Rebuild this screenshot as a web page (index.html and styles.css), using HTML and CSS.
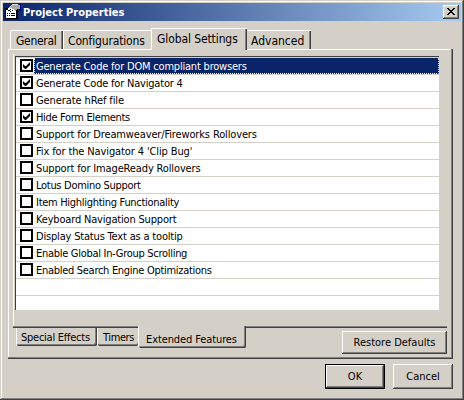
FILE: index.html
```html
<!DOCTYPE html>
<html lang="en">
<head>
<meta charset="utf-8">
<title>Project Properties</title>
<link rel="stylesheet" href="styles.css">
</head>
<body>
<main class="window">
  <header class="titlebar">
    <svg class="app-icon" width="16" height="16" viewBox="0 0 16 16" shape-rendering="crispEdges">
      <path d="M14 0h2v7h-2z" fill="#00007b"/>
      <path d="M0 4h13v11H0z" fill="#000"/>
      <path d="M1 6h10v8H1z" fill="#fff"/>
      <path d="M2 9h1v1H2zM4 9h1v1H4zM6 9h4v1H6zM2 11h1v1H2zM4 11h1v1H4zM6 11h4v1H6z" fill="#000"/>
      <path d="M7 0h6v1h2v4h-3v1h-1v1H9V6H8V5H6V4H4V3h1V2h1V1h1z" fill="#a8a8a8"/>
      <path d="M7 0h6v1H7zM6 1h1v1H6zM5 2h1v1H5z" fill="#e0e0e0"/>
      <path d="M3 4h1V3h1v1h2v1h2v1h1v1H8v1H6V7H5V6H3z" fill="#fff"/>
      <path d="M2 5h1v1H2zM5 5h1v1H5zM3 6h2v1H3zM7 6h1v1H7zM5 7h1v1H5z" fill="#000"/>
    </svg>
    <h1 class="title">Project Properties</h1>
    <button class="close" aria-label="Close"><svg width="8" height="7" viewBox="0 0 8 7" shape-rendering="crispEdges"><path d="M0 0h2v1h1v1h2V1h1V0h2v1H7v1H6v1H5v1h1v1h1v1h1v1H6V6H5V5H3v1H2v1H0V6h1V5h1V4h1V3H2V2H1V1H0z"/></svg></button>
  </header>
  <nav class="tabs">
    <button class="tab general">General</button>
    <button class="tab config">Configurations</button>
    <button class="tab global">Global Settings</button>
    <button class="tab advanced">Advanced</button>
  </nav>
  <section class="panel">
    <div class="page">
      <ul class="list">
        <li class="row selected"><i class="box"><svg class="check" viewBox="0 0 7 7"><path d="M0 2v3l2 2h1l4-4V0L3 4H2z"/></svg></i><span class="label">Generate Code for DOM compliant browsers</span></li>
        <li class="row"><i class="box"><svg class="check" viewBox="0 0 7 7"><path d="M0 2v3l2 2h1l4-4V0L3 4H2z"/></svg></i><span class="label">Generate Code for Navigator 4</span></li>
        <li class="row"><i class="box"></i><span class="label">Generate hRef file</span></li>
        <li class="row"><i class="box"><svg class="check" viewBox="0 0 7 7"><path d="M0 2v3l2 2h1l4-4V0L3 4H2z"/></svg></i><span class="label">Hide Form Elements</span></li>
        <li class="row"><i class="box"></i><span class="label">Support for Dreamweaver/Fireworks Rollovers</span></li>
        <li class="row"><i class="box"></i><span class="label">Fix for the Navigator 4 'Clip Bug'</span></li>
        <li class="row"><i class="box"></i><span class="label">Support for ImageReady Rollovers</span></li>
        <li class="row"><i class="box"></i><span class="label">Lotus Domino Support</span></li>
        <li class="row"><i class="box"></i><span class="label">Item Highlighting Functionality</span></li>
        <li class="row"><i class="box"></i><span class="label">Keyboard Navigation Support</span></li>
        <li class="row"><i class="box"></i><span class="label">Display Status Text as a tooltip</span></li>
        <li class="row"><i class="box"></i><span class="label">Enable Global In-Group Scrolling</span></li>
        <li class="row"><i class="box"></i><span class="label">Enabled Search Engine Optimizations</span></li>
        <li class="row"></li>
      </ul>
    </div>
    <div class="bottom">
      <nav class="subtabs">
        <button class="subtab effects">Special Effects</button>
        <button class="subtab timers">Timers</button>
        <button class="subtab extended">Extended Features</button>
      </nav>
      <button class="btn restore">Restore Defaults</button>
    </div>
  </section>
  <footer class="actions">
    <button class="btn ok">OK</button>
    <button class="btn cancel">Cancel</button>
  </footer>
</main>
</body>
</html>
```

FILE: styles.css
```css
* { box-sizing: border-box; }

body { margin: 0; }

button {
  font: inherit;
  color: inherit;
  background: none;
  border: 0;
  padding: 0;
  margin: 0;
  white-space: nowrap;
}

.window {
  width: 464px;
  height: 400px;
  padding: 3px;
  overflow: hidden;
  background: #d4d0c8;
  color: #000;
  font: 11px/14px "DejaVu Sans Condensed", "DejaVu Sans", sans-serif;
  font-stretch: condensed;
  box-shadow: inset -1px -1px #404040, inset 1px 1px #d4d0c8, inset -2px -2px #808080, inset 2px 2px #fff;
}

/* Title bar */
.titlebar {
  height: 18px;
  display: flex;
  align-items: center;
  padding: 0 2px;
  background: linear-gradient(90deg, #0a246a, #a6caf0);
}
.app-icon { flex: none; }
.title {
  margin: 0 auto 0 2px;
  padding-top: 2px;
  color: #fff;
  font-size: 11px;
  line-height: 16px;
  font-weight: bold;
}
.close {
  width: 16px;
  height: 14px;
  display: flex;
  align-items: center;
  justify-content: center;
  padding-bottom: 1px;
  background: #d4d0c8;
  box-shadow: inset -1px -1px #404040, inset 1px 1px #fff, inset -2px -2px #808080;
}

/* Top tabs */
.tabs {
  height: 28px;
  padding-left: 7px;
  display: flex;
  align-items: flex-end;
  font-size: 12px;
}
.tab {
  height: 19px;
  padding: 2px 0 0 5px;
  display: flex;
  align-items: flex-start;
  line-height: 16px;
  border-top: 1px solid #fff;
}
.general {
  width: 53px;
  border-left: 1px solid #fff;
  border-top-left-radius: 2px;
  box-shadow: inset -1px 0 #404040, inset -2px 0 #808080;
  letter-spacing: -0.3px;
}
.config {
  width: 88px;
  padding-left: 4px;
  border-left: 1px solid #fff;
  letter-spacing: -0.15px;
}
.global {
  position: relative;
  z-index: 1;
  width: 96px;
  height: 22px;
  margin-bottom: -1px;
  background: #d4d0c8;
  border-left: 1px solid #fff;
  border-top-left-radius: 2px;
  box-shadow: inset -1px 0 #404040, inset -2px 0 #808080;
  letter-spacing: -0.1px;
}
.advanced {
  width: 64px;
  padding-left: 4px;
  box-shadow: inset -1px 0 #404040, inset -2px 0 #808080;
  letter-spacing: 0;
}

/* Main panel */
.panel {
  width: 445px;
  height: 310px;
  margin-left: 5px;
  padding: 5px 6px 0 5px;
  box-shadow: inset -1px -1px #404040, inset -2px -2px #808080, inset 1px 1px #fff;
}
.page {
  width: 434px;
  height: 274px;
  padding: 2px 0 0 2px;
  box-shadow: inset 0 -1px #404040, inset 0 -2px #808080, inset 1px 0 #fff;
}
.list {
  list-style: none;
  margin: 0;
  padding: 1px 0 0;
  width: 424px;
  height: 254px;
  background: #fff;
  border-top: 1px solid #404040;
  border-left: 1px solid #404040;
  box-shadow: inset 0 1px #d4d0c8;
}
.row {
  height: 17px;
  padding: 1px 0 0 4px;
  display: flex;
  border-bottom: 1px solid #d4d0c8;
}
.box {
  flex: none;
  width: 13px;
  height: 13px;
  padding: 1px;
  border: 2px solid #000;
  background: #fff;
}
.check { display: block; width: 7px; height: 7px; }
.label {
  margin: -1px 0 0 1px;
  padding: 2px 0 0 1px;
  height: 16px;
  flex: 1;
  white-space: nowrap;
  letter-spacing: -0.2px;
  border: 0 dotted transparent;
  border-width: 0 1px;
}
.selected .label {
  background: #0a246a;
  color: #fff;
  border-width: 0 1px 1px;
  border-color: #f5db95;
  border-bottom-color: #fff;
}
.row:nth-child(3) .label { letter-spacing: -0.1px; }
.row:nth-child(4) .label { letter-spacing: -0.33px; }
.row:nth-child(5) .label { letter-spacing: -0.14px; }
.row:nth-child(6) .label { letter-spacing: -0.12px; }
.row:nth-child(7) .label { letter-spacing: -0.14px; }
.row:nth-child(8) .label,
.row:nth-child(9) .label,
.row:nth-child(12) .label,
.row:nth-child(13) .label { letter-spacing: -0.29px; }
.row:nth-child(10) .label,
.row:nth-child(11) .label { letter-spacing: -0.18px; }

/* Bottom tabs */
.bottom {
  height: 29px;
  display: flex;
  align-items: flex-start;
  justify-content: space-between;
}
.subtabs {
  display: flex;
  align-items: flex-start;
  padding-left: 3px;
}
.subtab {
  height: 18px;
  display: flex;
  align-items: flex-start;
  padding: 3px 0 0 4px;
  line-height: 13px;
  border-left: 1px solid #fff;
  border-bottom-left-radius: 2px;
  border-bottom-right-radius: 2px;
  box-shadow: inset -1px -1px #404040, inset -2px -2px #808080;
}
.effects { width: 81px; letter-spacing: -0.25px; }
.timers {
  width: 41px;
  padding-left: 5px;
  box-shadow: inset 0 -1px #404040, inset 0 -2px #808080;
  letter-spacing: -0.4px;
}
.extended {
  position: relative;
  width: 108px;
  height: 22px;
  margin-top: -2px;
  padding: 7px 0 0 7px;
  background: #d4d0c8;
  letter-spacing: -0.1px;
}

/* Push buttons */
.btn {
  width: 60px;
  height: 25px;
  box-shadow: inset -1px -1px #404040, inset 1px 1px #fff, inset -2px -2px #808080;
}
.restore { width: 105px; height: 23px; margin-top: 3px; }
.actions {
  display: flex;
  justify-content: flex-end;
  gap: 8px;
  padding: 5px 8px 0 0;
}
.ok { border: 1px solid #000; }
```
